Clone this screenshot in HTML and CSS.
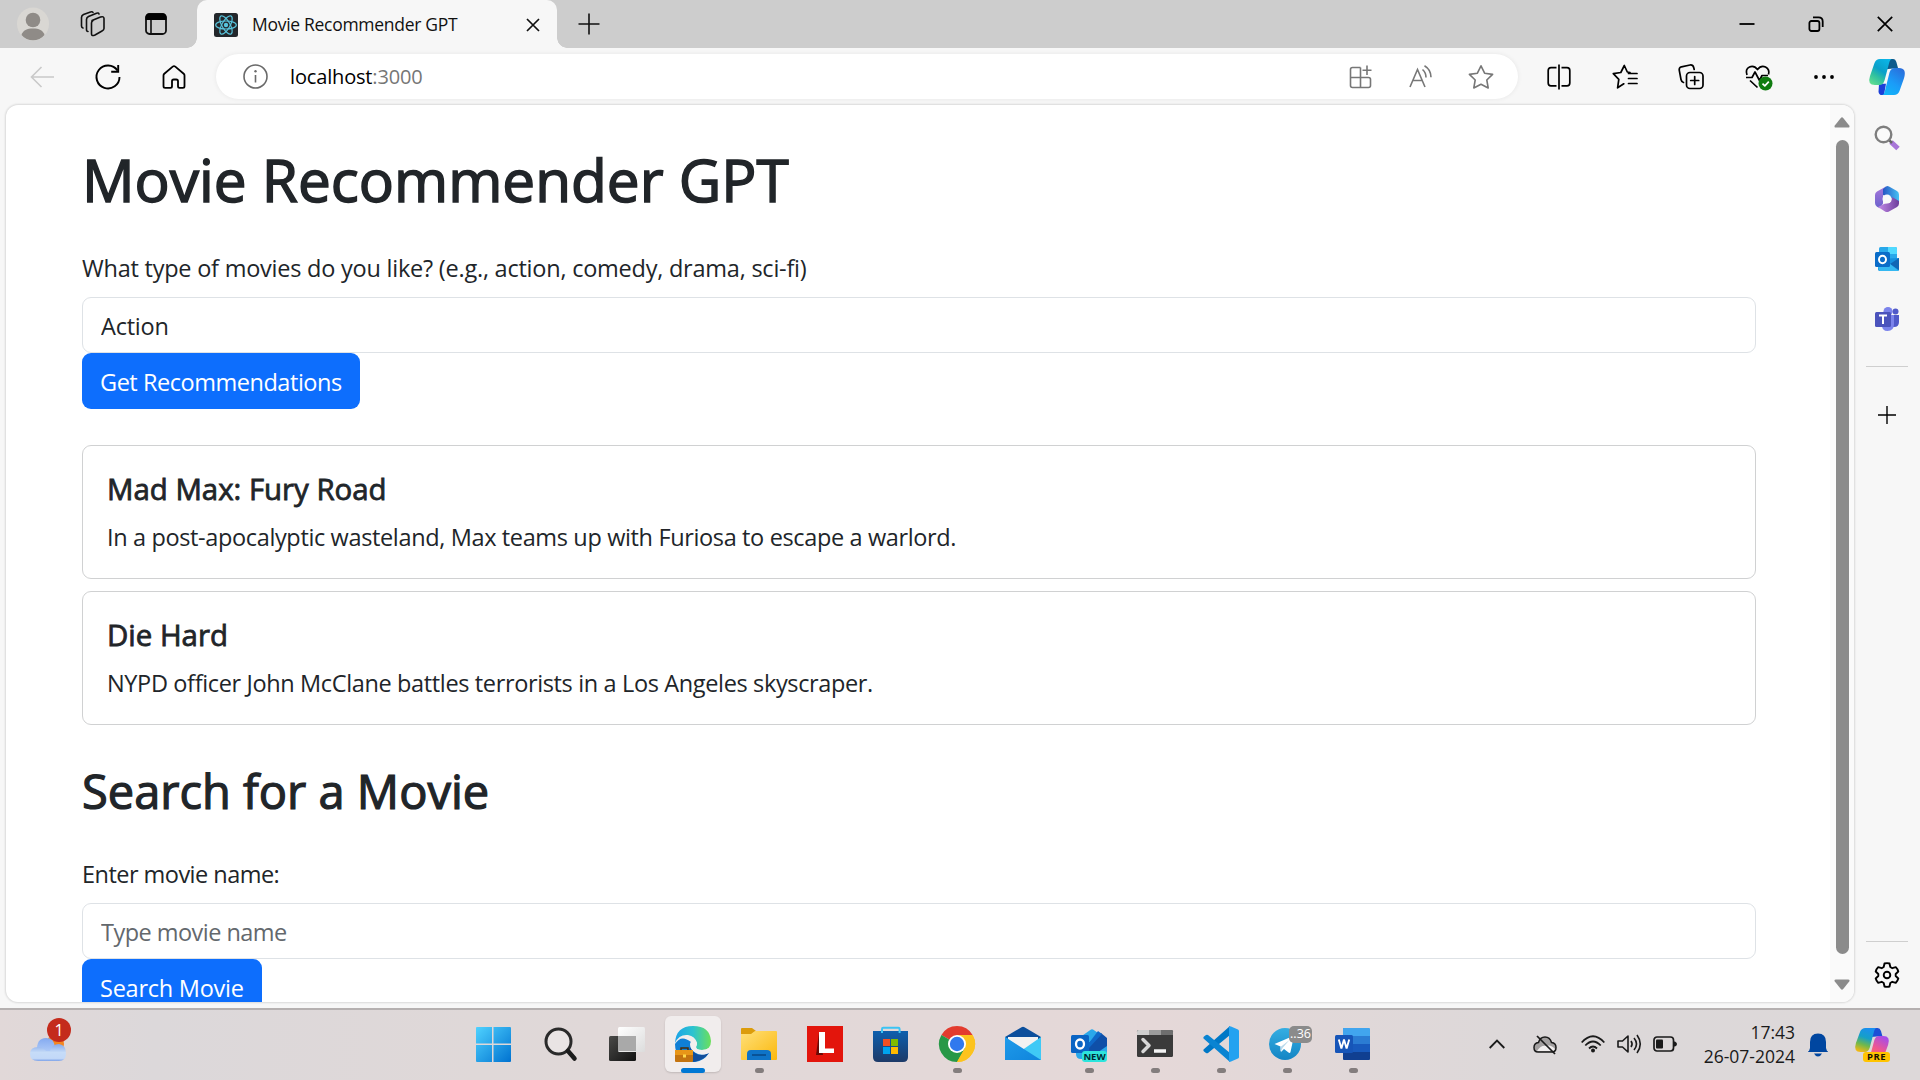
FILE: index.html
```html
<!DOCTYPE html>
<html lang="en">
<head>
<meta charset="utf-8">
<title>Movie Recommender GPT</title>
<link rel="stylesheet" href="styles.css">
</head>
<body>
<svg class="defs" width="0" height="0" aria-hidden="true">
  <defs>
    <linearGradient id="cpTeal" x1="0.8" y1="0" x2="0.2" y2="1"><stop offset="0" stop-color="#0bb6e8"/><stop offset=".45" stop-color="#0a9fc9"/><stop offset=".7" stop-color="#2fc0a0"/><stop offset="1" stop-color="#5fdc90"/></linearGradient>
    <linearGradient id="cpBlue" x1="0.8" y1="0" x2="0.2" y2="1"><stop offset="0" stop-color="#2a6fdc"/><stop offset=".55" stop-color="#1a9cf8"/><stop offset="1" stop-color="#12b4f8"/></linearGradient>
    <linearGradient id="cpWarm" x1="0.6" y1="0" x2="0.3" y2="1"><stop offset="0" stop-color="#1b8ef0"/><stop offset=".4" stop-color="#15a0c8"/><stop offset=".7" stop-color="#70b84c"/><stop offset="1" stop-color="#f2b813"/></linearGradient>
    <linearGradient id="cpPink" x1="0.8" y1="0" x2="0.3" y2="1"><stop offset="0" stop-color="#a04cf0"/><stop offset=".55" stop-color="#f0568f"/><stop offset="1" stop-color="#ff7a50"/></linearGradient>
    <linearGradient id="win" x1="0" y1="0" x2="1" y2="1"><stop offset="0" stop-color="#4fd2ff"/><stop offset="1" stop-color="#0072d0"/></linearGradient>
    <linearGradient id="edgeTop" x1="0" y1="0.6" x2="1" y2="0.6"><stop offset="0" stop-color="#1ba3e8"/><stop offset=".5" stop-color="#2cc3d0"/><stop offset="1" stop-color="#6be05a"/></linearGradient>
    <linearGradient id="folder" x1="0" y1="0" x2="1" y2="1"><stop offset="0" stop-color="#ffe07a"/><stop offset="1" stop-color="#fbb80c"/></linearGradient>
    <linearGradient id="blueV" x1="0" y1="0" x2="0" y2="1"><stop offset="0" stop-color="#0d5fae"/><stop offset="1" stop-color="#1d3a68"/></linearGradient>
    <linearGradient id="mail" x1="0" y1="0" x2="1" y2="1"><stop offset="0" stop-color="#1f9bea"/><stop offset="1" stop-color="#0f84dc"/></linearGradient>
    <linearGradient id="cloudBack" x1="0" y1="0" x2="0" y2="1"><stop offset="0" stop-color="#84aaf0"/><stop offset="1" stop-color="#bcd4fa"/></linearGradient>
    <linearGradient id="cloud" x1="0" y1="0" x2="0" y2="1"><stop offset="0" stop-color="#86a9ea"/><stop offset=".5" stop-color="#c6dcf8"/><stop offset=".85" stop-color="#c2d8f8"/><stop offset="1" stop-color="#7da2e8"/></linearGradient>
    <linearGradient id="tg" x1="0" y1="0" x2="0" y2="1"><stop offset="0" stop-color="#35aee2"/><stop offset="1" stop-color="#1485c4"/></linearGradient>
    <linearGradient id="dark" x1="0" y1="0" x2="1" y2="1"><stop offset="0" stop-color="#4a4a48"/><stop offset="1" stop-color="#111"/></linearGradient>
    <linearGradient id="light" x1="0" y1="0" x2="1" y2="1"><stop offset="0" stop-color="#fff"/><stop offset="1" stop-color="#dcdcdc"/></linearGradient>
    <linearGradient id="m1" x1="0" y1="0" x2="0" y2="1"><stop offset="0" stop-color="#a878dc"/><stop offset="1" stop-color="#6a62cc"/></linearGradient>
    <linearGradient id="m2" x1="0" y1="0" x2="1" y2="0"><stop offset="0" stop-color="#2757c4"/><stop offset="1" stop-color="#45c2f4"/></linearGradient>
    <linearGradient id="m3" x1="0" y1="0" x2="1" y2="0"><stop offset="0" stop-color="#c38ae8"/><stop offset="1" stop-color="#6d3f9c"/></linearGradient>
  </defs>
</svg>

<header class="tabstrip">
  <div class="strip-btn avatar-cell"><svg width="32" height="34" viewBox="0 0 32 34"><ellipse cx="16" cy="17" rx="16" ry="16.500" fill="#d9d7d3"/><circle cx="16" cy="13" r="7.300" fill="#8f8b87"/><path d="M4.500 28C6 23 10 21.500 16 21.500S26 23 27.500 28C22 35 10 35 4.500 28z" fill="#8f8b87"/></svg></div>
  <div class="strip-btn ws-cell"><svg width="26" height="26" viewBox="0 0 26 26" fill="none" stroke="#111" stroke-width="1.600" stroke-linejoin="round" stroke-linecap="round"><path d="M12 9.500l8.500-3.500q3.500-1 3.500 1.500v10q0 1.500-2 2.500l-7 4q-3.500 1.500-3.500-1v-11q0-1.500 1.500-2.500z"/><path d="M8 20.500q-1.500 0-1.500-2v-10q0-2 2-3l8-3.300q2-.7 2.500.8"/><path d="M3 17q-1.500-.5-1.500-2V6.500q0-2 2-3L10.500 1q2-.5 2.500.5"/></svg></div>
  <div class="strip-btn tabs-cell"><svg width="24" height="24" viewBox="0 0 24 24"><rect x="2" y="2" width="20" height="20" rx="3.500" fill="none" stroke="#111" stroke-width="1.800"/><path d="M1.500 8V5.500q0-4 4-4h13q4 0 4 4V8z" fill="#000"/><path d="M7 8v14" stroke="#111" stroke-width="1.600"/></svg></div>
  <div class="tab">
    <svg width="24" height="24" viewBox="0 0 24 24"><rect width="24" height="24" rx="2.500" fill="#23272b"/><g fill="none" stroke="#58c4dc" stroke-width="1.200"><ellipse cx="12" cy="12" rx="10.300" ry="4"/><ellipse cx="12" cy="12" rx="10.300" ry="4" transform="rotate(60 12 12)"/><ellipse cx="12" cy="12" rx="10.300" ry="4" transform="rotate(120 12 12)"/></g><circle cx="12" cy="12" r="2.200" fill="#58c4dc"/></svg>
    <span class="tab-title">Movie Recommender GPT</span>
    <svg class="tab-close" width="14" height="14" viewBox="0 0 14 14" stroke="#111" stroke-width="1.700"><path d="M1 1l12 12M13 1L1 13"/></svg>
  </div>
  <div class="new-tab"><svg width="22" height="22" viewBox="0 0 22 22" stroke="#111" stroke-width="1.600"><path d="M11 .5v21M.5 11h21"/></svg></div>
  <div class="window-controls">
    <span><svg width="16" height="16" viewBox="0 0 16 16"><path d="M.5 8h15" stroke="#000" stroke-width="1.800"/></svg></span>
    <span><svg width="16" height="16" viewBox="0 0 16 16" fill="none" stroke="#000" stroke-width="1.800"><rect x="1.400" y="5" width="10" height="10" rx="2"/><path d="M5 1.400h5.500q4.200 0 4.200 4.200V11"/></svg></span>
    <span><svg width="16" height="16" viewBox="0 0 16 16" stroke="#000" stroke-width="1.700"><path d="M.8.8l14.400 14.400M15.200.8L.8 15.200"/></svg></span>
  </div>
</header>

<div class="toolbar">
  <span class="nav-btn"><svg width="24" height="22" viewBox="0 0 24 22" fill="none" stroke="#c9c9c9" stroke-width="1.600"><path d="M24 11H1.500M11.500 1L1.500 11l10 10"/></svg></span>
  <span class="nav-btn"><svg width="26" height="26" viewBox="0 0 26 26" fill="none" stroke="#000" stroke-width="1.900"><path d="M22.500 6.500A11.500 11.500 0 1 0 24.500 13"/><path d="M23.200 1v6.700h-7"/></svg></span>
  <span class="nav-btn"><svg width="24" height="24" viewBox="0 0 24 24" fill="none" stroke="#000" stroke-width="1.800" stroke-linejoin="round"><path d="M1.500 10.500q0-1 .8-1.700L10.700 1.600q1.300-1 2.600 0l8.400 7.200q.8.700.8 1.700v10.700q0 1.600-1.600 1.600h-3.300q-1.600 0-1.600-1.600v-5q0-1.700-1.700-1.700h-2.600q-1.700 0-1.700 1.700v5q0 1.600-1.600 1.600H3.100q-1.600 0-1.600-1.600z"/></svg></span>
  <div class="address">
    <svg width="25" height="25" viewBox="0 0 25 25" fill="none" stroke="#6a6a6a" stroke-width="1.600"><circle cx="12.500" cy="12.500" r="11.500"/><path d="M12.500 11v7.500" /><circle cx="12.500" cy="7.300" r="1.200" fill="#6a6a6a" stroke="none"/></svg>
    <span class="url"><b>localhost</b>:3000</span>
    <span class="addr-actions">
      <span><svg width="24" height="24" viewBox="0 0 24 24" fill="none" stroke="#777" stroke-width="1.600"><path d="M11.500 2.500H3.500Q1.500 2.500 1.500 4.500v16q0 2 2 2h16q2 0 2-2v-6q0-2-2-2H1.500M11.500 2.500v20"/><path d="M18 .5v9.500M13.500 5.200h9"/></svg></span>
      <span><svg width="24" height="24" viewBox="0 0 24 24" fill="none" stroke="#777" stroke-width="1.600"><path d="M1 22L8.500 4.500 16 22M4 15.500h9"/><path d="M13.500 4.500q3.500 3 3.500 8M15.500 .8q6.500 4 6.500 11.500"/></svg></span>
      <span><svg width="26" height="24" viewBox="0 0 26 24" fill="none" stroke="#777" stroke-width="1.600" stroke-linejoin="round"><path d="M13 .8l3.600 7.400 8 1.200-5.800 5.600 1.400 8-7.200-3.700-7.200 3.700 1.400-8L1.400 9.400l8-1.200z"/></svg></span>
    </span>
  </div>
  <span class="tool-btn"><svg width="24" height="26" viewBox="0 0 24 26" fill="none" stroke="#000" stroke-width="1.700"><path d="M12 .5v25M9.500 3.700H4Q1.200 3.700 1.200 6.500v12.500q0 2.800 2.800 2.800h5.500M14.500 3.700H20q2.800 0 2.800 2.800v12.500q0 2.800-2.800 2.800h-5.500"/></svg></span>
  <span class="tool-btn"><svg width="26" height="26" viewBox="0 0 26 26" fill="none" stroke="#000" stroke-width="1.700" stroke-linejoin="round" stroke-linecap="round"><path d="M18 8.500l-2.700-.5-3-6.500-3.500 7-7.500 1.200 5.500 5.600-1.200 8.500 6.200-4"/><path d="M16.500 9.500H25M16.500 14.500H25M16.500 19.500H25"/></svg></span>
  <span class="tool-btn"><svg width="26" height="26" viewBox="0 0 26 26" fill="none" stroke="#000" stroke-width="1.700" stroke-linecap="round"><rect x="8.500" y="8.500" width="16.500" height="16" rx="3.500"/><path d="M16.700 12.500v8M12.700 16.500h8M5.500 18.500Q3.500 18 3 15.500L1.200 6Q1 3.500 3.500 2.800L12 1q3-.3 3.700 2.500l.5 2"/></svg></span>
  <span class="tool-btn health"><svg width="28" height="26" viewBox="0 0 28 26" fill="none" stroke="#000" stroke-width="1.700" stroke-linejoin="round"><path d="M2 11Q0 5 4.500 3 9 1 12.500 5.500 16 1 20.500 3 25 5.500 23.500 10.500M1 13.500h6l3-5.500 4.500 8.500 2.500-5h6M5 16.500l7.500 7"/><circle cx="20.500" cy="19.500" r="7" fill="#107c10" stroke="none"/><path d="M17.500 19.700l2.300 2.200 4-4.200" stroke="#fff"/></svg></span>
  <span class="tool-btn"><svg width="20" height="6" viewBox="0 0 20 6"><circle cx="2" cy="3" r="1.900"/><circle cx="10" cy="3" r="1.900"/><circle cx="18" cy="3" r="1.900"/></svg></span>
  <span class="copilot-btn"><svg width="36" height="36" viewBox="0 0 36 32" preserveAspectRatio="none"><path d="M24 0h-4l-3 9 12-1-1.500-5Q26.500 0 24 0z" fill="#0d5a8c"/><path d="M10 22h7l-2 10h-2q-3 0-3.500-3z" fill="#1b3fd8"/><path d="M23 0H11Q7 0 5.500 3.500L1 15Q-2 23 6 23h4.500q3.500 0 5-4L20 4q1-4 3-4z" fill="url(#cpTeal)"/><path d="M13 32h12q4 0 5.500-3.500L35 17q3-9-5-9h-4.500q-3.500 0-5 4L16 28q-1 4-3 4z" fill="url(#cpBlue)"/></svg></span>
</div>

<div class="workspace">
  <div class="viewport">
    <main class="page">
      <h1>Movie Recommender GPT</h1>
      <form class="field">
        <label for="genre">What type of movies do you like? (e.g., action, comedy, drama, sci-fi)</label>
        <input id="genre" type="text" value="Action">
        <button type="button" class="get">Get Recommendations</button>
      </form>
      <section class="results">
        <article class="card"><h5>Mad Max: Fury Road</h5><p>In a post-apocalyptic wasteland, Max teams up with Furiosa to escape a warlord.</p></article>
        <article class="card"><h5>Die Hard</h5><p>NYPD officer John McClane battles terrorists in a Los Angeles skyscraper.</p></article>
      </section>
      <h2>Search for a Movie</h2>
      <form class="field lookup">
        <label for="name">Enter movie name:</label>
        <input id="name" type="text" placeholder="Type movie name">
        <button type="button" class="search">Search Movie</button>
      </form>
    </main>
    <div class="scrollbar">
      <svg width="16" height="11" viewBox="0 0 16 11"><path d="M6.800 1q1.200-1.300 2.400 0l6 7.500q1 2-1 2H1.800q-2 0-1-2z" fill="#8b8b8b"/></svg>
      <div class="thumb"></div>
      <svg width="16" height="11" viewBox="0 0 16 11"><path d="M6.800 10q1.200 1.300 2.400 0l6-7.500q1-2-1-2H1.800q-2 0-1 2z" fill="#8b8b8b"/></svg>
    </div>
  </div>
  <aside class="sidebar">
    <span class="side-item"><svg width="26" height="26" viewBox="0 0 26 26"><path d="M17 17l7 6.500" stroke="#a876d8" stroke-width="5"/><path d="M15 15l3 3" stroke="#666" stroke-width="2.500"/><circle cx="9.500" cy="9.500" r="7.800" fill="#fafafa" stroke="#7e7e7e" stroke-width="2.400"/></svg></span>
    <span class="side-item"><svg width="26" height="26" viewBox="0 0 26 26"><path d="M12 .5L3 5.500Q1 6.700 1 9v8q0 2.500 2 3.700l3 1.500 3-4.700V9z" fill="url(#m1)"/><path d="M12 .5q1.500-.8 3 0l8 4.500q2 1.200 2 3.700V17l-8-5-8-3V3z" fill="url(#m2)"/><path d="M25 15v2.500q0 2.200-2 3.400l-8 4.500q-2 1-4 0L4 21l6-3 7-2 1-5z" fill="url(#m3)"/><circle cx="13" cy="13" r="4.500" fill="#f9f9f9"/></svg></span>
    <span class="side-item"><svg width="24" height="24" viewBox="0 0 24 24"><rect x="4" y="0" width="18" height="13" rx="1.500" fill="#28a8ea"/><path d="M13 0h7.500Q22 0 22 1.500V7h-9z" fill="#50d9ff"/><path d="M3 12l21-1v11.500q0 1.500-1.500 1.500h-18Q3 24 3 22z" fill="#1490df"/><path d="M24 11v12l-9-6z" fill="#1066b5"/><path d="M3 20l12-3 9 7H4.500z" fill="#35b8f1"/><rect y="5" width="15" height="15" rx="1.500" fill="#0a6cc8"/><ellipse cx="7.500" cy="12.500" rx="3.500" ry="3.800" fill="none" stroke="#fff" stroke-width="2"/></svg></span>
    <span class="side-item"><svg width="24" height="24" viewBox="0 0 24 24"><circle cx="13" cy="4.500" r="4.500" fill="#7b83eb"/><circle cx="20.500" cy="4.500" r="3" fill="#5059c9"/><path d="M15 8h9v7q0 5-5 5h-4z" fill="#5059c9"/><path d="M7 8h12v9q0 7-6.500 7Q7 24 7 18z" fill="#7b83eb"/><rect y="5" width="16" height="15" rx="1.500" fill="#4b53bc"/><path d="M4 8.500h8M8 8.500v8.500" stroke="#fff" stroke-width="2"/></svg></span>
    <hr>
    <span class="side-add"><svg width="18" height="18" viewBox="0 0 18 18" stroke="#000" stroke-width="1.400"><path d="M9 0v18M0 9h18"/></svg></span>
    <hr class="push">
    <span class="side-settings"><svg width="26" height="26" viewBox="0 0 26 26" fill="none" stroke="#000" stroke-width="1.900" stroke-linejoin="round"><path d="M10.500 1.500Q13 .8 15.500 1.500L16.300 5l2 1.200 3.500-1Q23.600 7 24.300 9.500L21.700 12v2l2.600 2.500q-.7 2.500-2.500 4.300l-3.500-1-2 1.200-.8 3.500q-2.500.7-5 0L9.700 21l-2-1.200-3.500 1Q2.400 19 1.700 16.500L4.300 14v-2L1.700 9.500Q2.400 7 4.200 5.200l3.500 1 2-1.200z"/><circle cx="13" cy="13" r="3.300"/></svg></span>
  </aside>
</div>

<footer class="taskbar">
  <div class="weather"><svg width="36" height="36" viewBox="0 0 36 36"><circle cx="25" cy="19" r="9" fill="#f5851f"/><path d="M7 27Q6 13 16 13q8 0 9 9l-4 9H9z" fill="url(#cloudBack)"/><path d="M8 36Q0 36 0 29t8-7q5 0 8 4l4 0q2-7 9-7 7 1 7 9 0 8-7 8z" fill="url(#cloud)"/></svg><span class="badge">1</span></div>
  <div class="apps">
    <span class="app"><svg class="nudge" width="36" height="36" viewBox="0 0 36 36"><path d="M1 2q0-1 1-1h15v16.500H1zM18.500 1H35q1 0 1 1v15.500H18.500zM1 19h16v17H2q-1 0-1-1zM18.500 19H36v16q0 1-1 1H18.500z" fill="url(#win)"/></svg></span>
    <span class="app"><svg width="36" height="36" viewBox="0 0 36 36"><circle cx="15.500" cy="15.500" r="12.500" fill="#e9e4e4" stroke="#2a2a2a" stroke-width="3"/><path d="M25 25l6.500 7.500" stroke="#1c1c1c" stroke-width="4.500" stroke-linecap="round"/></svg></span>
    <span class="app"><svg width="36" height="36" viewBox="0 0 36 36"><rect y="10" width="27" height="25" rx="1.500" fill="url(#dark)"/><rect x="9" y="1" width="27" height="25" rx="1.500" fill="url(#light)"/><path d="M9 10h18v15H9z" fill="#a9a9a9"/></svg></span>
    <span class="app active run"><svg width="36" height="36" viewBox="0 0 36 36"><path d="M0 18Q0 36 20 36q9-1 14-9-4 3-9 1-11-3-9-12Q6 8 0 18z" fill="#0f7fd6"/><path d="M18 36q10-1 16-9-13 6-19-6-3 9 3 15z" fill="#134f9c"/><path d="M0 17Q1 0 18 0q17 0 18 15 0 9-9 9-6 0-6-3 1-2 1-4-2-7-9-8Q4 8 0 17z" fill="url(#edgeTop)"/><path d="M15 18q1-4 4-4 3 1 3 4l-1 3q0 3 6 3 4 0 7-2v5q-8 3-13 0-6-3-6-9z" fill="#f3efef"/><path d="M6 24v-2h7v2" fill="none" stroke="#4a2c08" stroke-width="1.500"/><rect y="24" width="18" height="12" rx="1" fill="#c47410"/><path d="M0 24h18v5H0z" fill="#e89618"/><rect x="8" y="28.500" width="3" height="3" fill="#ffd94a"/></svg></span>
    <span class="app run"><svg width="36" height="36" viewBox="0 0 36 36"><path d="M0 3q0-1 1-1h10l4 3-4 3H0z" fill="#dc9c0b"/><path d="M0 8h10l4-3h21q1 0 1 1v27q0 1-1 1H1q-1 0-1-1z" fill="url(#folder)"/><path d="M6 34v-6q0-4 4-4h16q4 0 4 4v6z" fill="#0f74c8"/><path d="M11 29h14" stroke="#0a4f90" stroke-width="1.800"/></svg></span>
    <span class="app"><svg width="36" height="36" viewBox="0 0 36 36"><path d="M0 0h36v36H0z" fill="#e3150c"/><path d="M12 7l-3 22h7z" fill="#6a0a06"/><path d="M12 6h6v16.500h9V27H12z" fill="#fff"/></svg></span>
    <span class="app"><svg width="36" height="36" viewBox="0 0 36 36"><path d="M0 5h35v26q0 5-5 5H5q-5 0-5-5z" fill="url(#blueV)"/><path d="M9 7V3q0-1.300 1.300-1.300h15q1.300 0 1.300 1.300v4" fill="none" stroke="#3cc4f4" stroke-width="2"/><path d="M10 13h7v7h-7z" fill="#f25022"/><path d="M18 13h7v7h-7z" fill="#7fba00"/><path d="M10 21h7v7h-7z" fill="#00a4ef"/><path d="M18 21h7v7h-7z" fill="#ffb900"/></svg></span>
    <span class="app run"><svg width="36" height="36" viewBox="0 0 36 36"><path d="M18 18L2.400 9A18 18 0 0 1 33.600 9z" fill="#e33b2e"/><path d="M18 18l15.600-9A18 18 0 0 1 18 36z" fill="#fcc31e"/><path d="M18 18L2.400 9A18 18 0 0 0 18 36l8-14z" fill="#279847"/><path d="M18 9h15.600A18 18 0 0 1 18 36l8-14z" fill="#fcc31e"/><circle cx="18" cy="18" r="9" fill="#fff"/><circle cx="18" cy="18" r="7.200" fill="#3079ee"/></svg></span>
    <span class="app"><svg width="36" height="36" viewBox="0 0 36 36"><path d="M0 11L16.500 1.200q1.500-.8 3 0L36 11v5H0z" fill="#0c4f9c"/><path d="M3 11h30v18H3z" fill="#f2f2f2"/><path d="M0 11l18 12.500L36 11v23H0z" fill="#3fc9f6"/><path d="M0 11l36 23H0z" fill="url(#mail)"/></svg></span>
    <span class="app run"><svg width="36" height="36" viewBox="0 0 36 36"><path d="M5 14L20 3.500q1-.7 2 0L36 13v16q0 4-4 4H10q-5 0-5-5z" fill="#2aa8ea"/><path d="M14 20L30 7l6 5v8L20 31z" fill="#0f4fa8"/><path d="M18 17L27 5l4 3-13 14z" fill="#0f68c8"/><rect y="9" width="18" height="18" rx="1.500" fill="#0a64c4"/><ellipse cx="9" cy="18" rx="4" ry="4.500" fill="none" stroke="#fff" stroke-width="2.300"/></svg><i class="tag new">NEW</i></span>
    <span class="app run"><svg width="36" height="36" viewBox="0 0 36 36"><rect y="4" width="36" height="27" rx="1.500" fill="#3a3a3a"/><path d="M0 9V5.500Q0 4 1.500 4H12v5z" fill="#cfcfcf"/><path d="M12 4h12v5H12z" fill="#9c9c9c"/><path d="M24 4h10.500Q36 4 36 5.500V9H24z" fill="#6e6e6e"/><path d="M6 13.500l6 6-6 6" fill="none" stroke="#d8d8d8" stroke-width="3.500" stroke-linecap="round" stroke-linejoin="round"/><path d="M17 25h12" stroke="#f4f4f4" stroke-width="3.500"/></svg></span>
    <span class="app run"><svg width="36" height="36" viewBox="0 0 36 36"><path d="M.5 23.500Q0 25 1 25.500l2 1.500q1 .5 2 0L27 9V0z" fill="#0078c6"/><path d="M.5 12.500Q0 11 1 10.500L3 9q1-.5 2 0l22 18v9z" fill="#0a84d2"/><path d="M26 .3Q27 0 28 .5l7 3q1 .5 1 1.500v26q0 1-1 1.500l-7 3q-1 .5-2 0z" fill="#24a2f0"/></svg></span>
    <span class="app run"><svg width="36" height="36" viewBox="0 0 36 36"><circle cx="16" cy="18" r="16" fill="url(#tg)"/><path d="M5.500 18L23 10.500q2-.5 1.500 1.500l-3 14q-.5 1.500-2 .5l-4.500-3.500-2.500 2.500q-1 .5-1-1v-4z" fill="#fff"/><path d="M11.500 21l9-7-7 8-1 3z" fill="#b8d8ea"/></svg><i class="tag count">..36</i></span>
    <span class="app run"><svg width="36" height="36" viewBox="0 0 36 36"><path d="M8 2h26q1 0 1 1v7H8z" fill="#41a5ee"/><path d="M8 10h27v8H8z" fill="#2b7cd3"/><path d="M8 18h27v8H8z" fill="#185abd"/><path d="M8 26h27v7q0 1-1 1H9q-1 0-1-1z" fill="#103f91"/><rect y="9" width="18" height="18" rx="1.500" fill="#1655b8"/><path d="M3.800 13.500l2.600 9 2.600-9 2.600 9 2.600-9" fill="none" stroke="#fff" stroke-width="1.900" stroke-linejoin="bevel"/></svg></span>
  </div>
  <div class="tray">
    <svg class="chev" width="16" height="10" viewBox="0 0 16 10" fill="none" stroke="#1a1a1a" stroke-width="1.800"><path d="M.7 9L8 1.500 15.300 9"/></svg>
    <svg class="onedrive" width="24" height="20" viewBox="0 0 24 20"><path d="M5 17Q1 17 1 12.500 1 8 5.500 7.500 7 2 12 2t6.500 5.500Q23 8 23 12.500T19 17z" fill="#a3a0a0" stroke="#1a1a1a" stroke-width="1.500"/><path d="M4 16q4-6 9-5 5-2 9 3-1 2-3 2H5z" fill="#f1eeee"/><path d="M4 1l18 18" stroke="#1a1a1a" stroke-width="1.700"/></svg>
    <svg class="wifi" width="24" height="18" viewBox="0 0 24 18" fill="none" stroke="#1a1a1a" stroke-width="1.800"><path d="M.7 7.500Q12-5 23.300 7.500M4.300 10.500q7.700-8 15.400 0M8 13.500q4-4 8 0"/><circle cx="12" cy="15.500" r="2" fill="#1a1a1a" stroke="none"/></svg>
    <svg class="sound" width="24" height="20" viewBox="0 0 24 20" fill="none" stroke="#1a1a1a" stroke-width="1.600" stroke-linejoin="round"><path d="M1 7h4.500L11 2v16l-5.500-5H1z"/><path d="M14 7q2.200 3 0 6M17 4q5 6 0 12M20 1q6.500 9 0 18"/></svg>
    <svg class="battery" width="24" height="16" viewBox="0 0 24 16"><rect x="1" y="1" width="19.500" height="14" rx="3" fill="none" stroke="#1a1a1a" stroke-width="1.700"/><rect x="3" y="3.500" width="7" height="9" rx="1" fill="#1a1a1a"/><path d="M21 5.500h1q2 1 2 2.500t-2 2.500h-1z" fill="#1a1a1a"/></svg>
    <div class="clock"><span>17:43</span><span>26-07-2024</span></div>
    <svg class="bell" width="20" height="24" viewBox="0 0 20 24" fill="#0046a0"><path d="M0 19q0-1 1-1l1-3V9q0-8.500 8-8.500T18 9v6l1 3q1 0 1 1zM6 20.500h8q-1.500 3-4 3t-4-3z"/></svg>
    <span class="pre"><svg width="34" height="32" viewBox="0 0 36 32" preserveAspectRatio="none"><path d="M24 0h-4l-3 9 12-1-1.500-5Q26.500 0 24 0z" fill="#1c4fd6"/><path d="M23 0H11Q7 0 5.500 3.500L1 15Q-2 24 6 24h4.500q3.500 0 5-4L20 4q1-4 3-4z" fill="url(#cpWarm)"/><path d="M13 32h12q4 0 5.500-3.500L35 17q3-9-5-9h-4.500q-3.500 0-5 4L16 28q-1 4-3 4z" fill="url(#cpPink)"/></svg><i class="tag prelabel">PRE</i></span>
  </div>
</footer>
</body>
</html>
```
FILE: styles.css
```css
* { box-sizing: border-box; }
html, body { height: 100%; overflow: hidden; }
body {
  margin: 0;
  display: flex;
  flex-direction: column;
  background: #f7f7f7;
  color: #212529;
  font-family: "Open Sans", "Noto Sans", sans-serif;
}
svg { display: block; flex: none; overflow: visible; }
.defs { position: absolute; }

/* tab strip */
.tabstrip { display: flex; align-items: center; height: 48px; flex: none; background: #cdcdcd; }
.strip-btn { display: flex; justify-content: center; }
.avatar-cell { width: 66px; }
.ws-cell { width: 54px; }
.tabs-cell { width: 72px; }
.tab {
  position: relative;
  display: flex;
  align-items: center;
  width: 360px;
  height: 48px;
  margin-left: 5px;
  padding: 2px 17px 0 17px;
  border-radius: 10px 10px 0 0;
  background: #f7f7f7;
}
.tab::before, .tab::after {
  content: "";
  position: absolute;
  bottom: 0;
  width: 10px;
  height: 10px;
}
.tab::before { left: -10px; background: radial-gradient(circle at 0 0, transparent 9.5px, #f7f7f7 10px); }
.tab::after { right: -10px; background: radial-gradient(circle at 100% 0, transparent 9.5px, #f7f7f7 10px); }
.tab-title { margin: -3px 0 0 14px; font-size: 17.500px; letter-spacing: -.29px; color: #111; white-space: nowrap; }
.tab-close { margin-left: auto; }
.new-tab { margin: -1px 0 0 21px; }
.window-controls { display: flex; margin: -1px 1px 0 auto; }
.window-controls span { display: flex; justify-content: center; width: 69px; }

/* toolbar */
.toolbar { display: flex; align-items: center; height: 57px; flex: none; padding-left: 9px; }
.nav-btn { display: flex; justify-content: center; width: 66px; }
.address {
  display: flex;
  align-items: center;
  width: 1302px;
  height: 45px;
  margin: 0 8px 0 9px;
  padding: 0 7px 0 27px;
  border-radius: 23px;
  background: #fff;
  box-shadow: 0 0 5px rgba(0, 0, 0, .07);
}
.url { margin: -1px 0 0 22px; font-size: 20px; letter-spacing: -.16px; color: #767676; }
.url b { font-weight: 400; color: #000; }
.addr-actions { display: flex; margin-left: auto; }
.addr-actions span { display: flex; justify-content: center; width: 60px; }
.tool-btn { display: flex; justify-content: center; width: 66.200px; }
.health { padding-left: 3px; }
.copilot-btn { display: flex; justify-content: center; width: 60px; }

/* page area */
.workspace { display: flex; height: 905px; flex: none; padding-left: 6px; border-bottom: 2px solid #b5b0b0; }
.viewport {
  display: flex;
  width: 1848px;
  height: 897px;
  overflow: hidden;
  border-radius: 12px;
  background: #fff;
  box-shadow: 0 0 2px 1px rgba(0, 0, 0, .12);
}
.page { width: 1824px; padding: 38px 74px 0 76px; font-size: 23.500px; }
h1, h2, h5, p { margin: 0; font-weight: 400; white-space: nowrap; }
h1 { font-size: 58.500px; line-height: 72px; -webkit-text-stroke: 1.500px #212529; }
h2 { margin-top: 37px; font-size: 47px; line-height: 58px; -webkit-text-stroke: 1.200px #212529; }
.field { display: flex; flex-direction: column; align-items: flex-start; letter-spacing: -.23px; }
.lookup { letter-spacing: -.53px; }
h1 + .field { margin-top: 35px; }
h2 + .field { margin-top: 36px; }
.field label { line-height: 36px; margin-bottom: 11px; white-space: nowrap; }
.field input {
  width: 100%;
  height: 56px;
  padding: 2px 18px 0;
  border: 1px solid #dee2e6;
  border-radius: 9px;
  background: #fff;
  color: inherit;
  font: inherit;
  letter-spacing: inherit;
}
.field input::placeholder { color: #63686d; opacity: 1; }
.field button {
  height: 56px;
  padding: 2px 0 0 18px;
  border: 0;
  border-radius: 9px;
  background: #0d6efd;
  color: #fff;
  font: inherit;
  text-align: left;
  white-space: nowrap;
}
.field .get { width: 278px; letter-spacing: -.46px; }
.field .search { width: 180px; letter-spacing: -.25px; }
.results { display: flex; flex-direction: column; gap: 12px; margin-top: 36px; }
.card { height: 134px; padding: 25px 24px 0; border: 1px solid #d0d1d2; border-radius: 9px; }
.card h5 { margin-bottom: 12px; font-size: 29.400px; line-height: 36px; -webkit-text-stroke: .800px #212529; }
.card p { line-height: 36px; letter-spacing: -.36px; }

.scrollbar { display: flex; flex-direction: column; align-items: center; width: 24px; padding: 12px 0; background: #fafafa; }
.thumb { width: 13px; height: 815px; margin: 12px 0 25px; border-radius: 7px; background: #8b8b8b; }

/* browser sidebar */
.sidebar { display: flex; flex-direction: column; align-items: center; width: 66px; height: 903px; }
.side-item { display: flex; align-items: center; justify-content: center; height: 60.400px; }
.side-item:first-child { margin-top: 3px; }
.sidebar hr { width: 42px; height: 1px; margin: 16px 0 0; border: 0; background: #cfcfcf; }
.side-add { margin-top: 39px; }
.sidebar hr.push { margin-top: auto; }
.side-settings { margin: 20px 0 20px; }

/* taskbar */
.taskbar {
  display: flex;
  height: 70px;
  flex: none;
  background: linear-gradient(90deg, #e1d8d8 0, #dcd8da 8%, #dfd8d8 25%, #e5d8d8 60%, #dcd8d9 80%, #ddd8d9 100%);
}
.weather { position: relative; width: 462px; padding: 15px 0 0 30px; }
.badge {
  position: absolute;
  left: 47px;
  top: 8px;
  width: 24px;
  height: 24px;
  border-radius: 50%;
  background: #c42b1c;
  color: #fff;
  font-size: 16px;
  line-height: 24px;
  text-align: center;
}
.apps { display: flex; width: 924px; }
.app { position: relative; display: flex; justify-content: center; width: 66px; padding-top: 16px; }
.nudge { margin-right: 5px; }
.app.active::before {
  content: "";
  position: absolute;
  left: 5px;
  top: 6px;
  width: 56px;
  height: 56px;
  border-radius: 6px;
  background: #f1eded;
  box-shadow: 0 1px 2px rgba(0, 0, 0, .15);
}
.app svg { position: relative; }
.app.run::after {
  content: "";
  position: absolute;
  left: 28.500px;
  top: 58px;
  width: 9px;
  height: 5px;
  border-radius: 3px;
  background: #837d7d;
}
.app.active.run::after { left: 21px; width: 24px; background: #0078d4; }
.tag { position: absolute; font-style: normal; text-align: center; white-space: nowrap; }
.new { left: 26px; top: 41px; width: 25px; height: 11px; border-radius: 3px; background: #2ce4dc; color: #002b36; font-size: 9.500px; font-weight: 700; line-height: 11px; }
.count { left: 35px; top: 16px; width: 23px; height: 17px; border-radius: 5px; background: #8b8b8b; color: #fff; font-size: 12.500px; line-height: 16px; }
.tray { display: flex; align-items: flex-start; margin-left: 103px; }
.chev { margin-top: 29px; }
.onedrive { margin: 25px 0 0 28px; }
.wifi { margin: 25px 0 0 24px; }
.sound { margin: 24px 0 0 12px; }
.battery { margin: 26px 0 0 12px; }
.clock { display: flex; flex-direction: column; align-items: flex-end; width: 118px; padding-top: 10px; font-size: 17.500px; line-height: 24px; color: #1a1a1a; }
.bell { margin: 23px 0 0 13px; }
.pre { position: relative; margin: 18px 0 0 27px; }
.prelabel { left: 8px; top: 24px; width: 27px; height: 10px; border-radius: 3px; background: #ffc400; color: #1a1200; font-size: 9.500px; font-weight: 700; letter-spacing: .5px; line-height: 10px; }
```
